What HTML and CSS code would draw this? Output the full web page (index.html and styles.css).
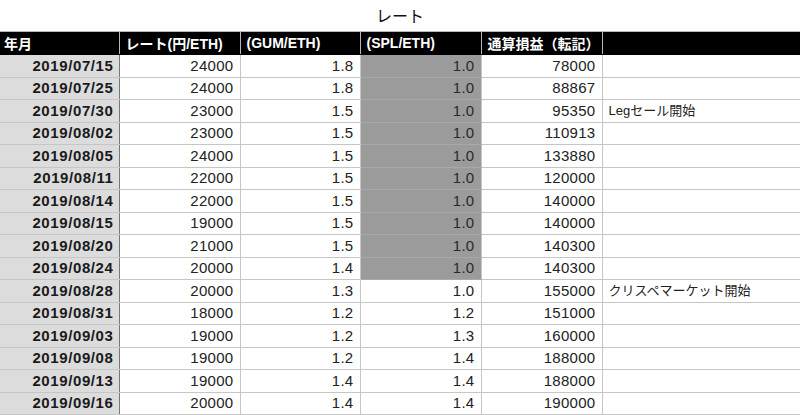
FILE: index.html
```html
<!DOCTYPE html>
<html lang="ja">
<head>
<meta charset="utf-8">
<link rel="stylesheet" href="styles.css">
</head>
<body>
<div class="title">レート</div>
<table class="sheet">
<colgroup>
<col class="c-date"><col class="c-rate"><col class="c-gum"><col class="c-spl"><col class="c-total"><col class="c-note">
</colgroup>
<thead>
<tr><th>年月</th><th>レート(円/ETH)</th><th>(GUM/ETH)</th><th>(SPL/ETH)</th><th>通算損益（転記）</th><th></th></tr>
</thead>
<tbody>
<tr><td class="date">2019/07/15</td><td>24000</td><td>1.8</td><td class="spl dark">1.0</td><td>78000</td><td class="note"></td></tr>
<tr><td class="date">2019/07/25</td><td>24000</td><td>1.8</td><td class="spl dark">1.0</td><td>88867</td><td class="note"></td></tr>
<tr><td class="date">2019/07/30</td><td>23000</td><td>1.5</td><td class="spl dark">1.0</td><td>95350</td><td class="note">Legセール開始</td></tr>
<tr><td class="date">2019/08/02</td><td>23000</td><td>1.5</td><td class="spl dark">1.0</td><td>110913</td><td class="note"></td></tr>
<tr><td class="date">2019/08/05</td><td>24000</td><td>1.5</td><td class="spl dark">1.0</td><td>133880</td><td class="note"></td></tr>
<tr><td class="date">2019/08/11</td><td>22000</td><td>1.5</td><td class="spl dark">1.0</td><td>120000</td><td class="note"></td></tr>
<tr><td class="date">2019/08/14</td><td>22000</td><td>1.5</td><td class="spl dark">1.0</td><td>140000</td><td class="note"></td></tr>
<tr><td class="date">2019/08/15</td><td>19000</td><td>1.5</td><td class="spl dark">1.0</td><td>140000</td><td class="note"></td></tr>
<tr><td class="date">2019/08/20</td><td>21000</td><td>1.5</td><td class="spl dark">1.0</td><td>140300</td><td class="note"></td></tr>
<tr><td class="date">2019/08/24</td><td>20000</td><td>1.4</td><td class="spl dark">1.0</td><td>140300</td><td class="note"></td></tr>
<tr><td class="date">2019/08/28</td><td>20000</td><td>1.3</td><td class="spl">1.0</td><td>155000</td><td class="note">クリスペマーケット開始</td></tr>
<tr><td class="date">2019/08/31</td><td>18000</td><td>1.2</td><td class="spl">1.2</td><td>151000</td><td class="note"></td></tr>
<tr><td class="date">2019/09/03</td><td>19000</td><td>1.2</td><td class="spl">1.3</td><td>160000</td><td class="note"></td></tr>
<tr><td class="date">2019/09/08</td><td>19000</td><td>1.2</td><td class="spl">1.4</td><td>188000</td><td class="note"></td></tr>
<tr><td class="date">2019/09/13</td><td>19000</td><td>1.4</td><td class="spl">1.4</td><td>188000</td><td class="note"></td></tr>
<tr><td class="date">2019/09/16</td><td>20000</td><td>1.4</td><td class="spl">1.4</td><td>190000</td><td class="note"></td></tr>
</tbody>
</table>
</body>
</html>
```
FILE: styles.css
```css
html, body {
  margin: 0;
  padding: 0;
  background: #ffffff;
  overflow: hidden;
}
body {
  font-family: "Liberation Sans", "Noto Sans CJK JP", sans-serif;
  color: #222222;
}
.title {
  height: 31px;
  line-height: 33px;
  text-align: center;
  font-size: 16px;
  color: #111111;
}
.sheet {
  width: 800px;
  border-collapse: collapse;
  table-layout: fixed;
  font-size: 15px;
}
.c-date { width: 119px; }
.c-rate { width: 121px; }
.c-gum { width: 120px; }
.c-spl { width: 121px; }
.c-total { width: 121px; }
.c-note { width: 198px; }

.sheet th {
  background: #000000;
  color: #ffffff;
  font-weight: bold;
  font-size: 14px;
  text-align: left;
  height: 22px;
  padding: 0 6px;
  border: 1px solid #b8b8b8;
  border-bottom-color: #000000;
  white-space: nowrap;
  overflow: hidden;
}
.sheet th:first-child { padding-left: 4px; border-left: none; }
.sheet th:last-child { border-right: none; }

.sheet td {
  height: 21.5px;
  padding: 0 6px;
  text-align: right;
  border: 1px solid #c6c6c6;
  white-space: nowrap;
  overflow: hidden;
  line-height: 18px;
  letter-spacing: 0.3px;
}
.sheet td:first-child { border-left: none; }
.sheet td:last-child { border-right: none; }

.sheet td.date {
  background: #dcdcdc;
  font-weight: bold;
  letter-spacing: 0.6px;
  color: #1a1a1a;
  border-right: 1px solid #777777;
  padding-right: 5px;
}
.sheet td.spl.dark {
  background: #9b9b9b;
  border-top-color: #a8a8a8;
  border-bottom-color: #a8a8a8;
  color: #2a2a2a;
}
.sheet td.note {
  text-align: left;
  font-size: 13px;
  letter-spacing: 0;
}
```
